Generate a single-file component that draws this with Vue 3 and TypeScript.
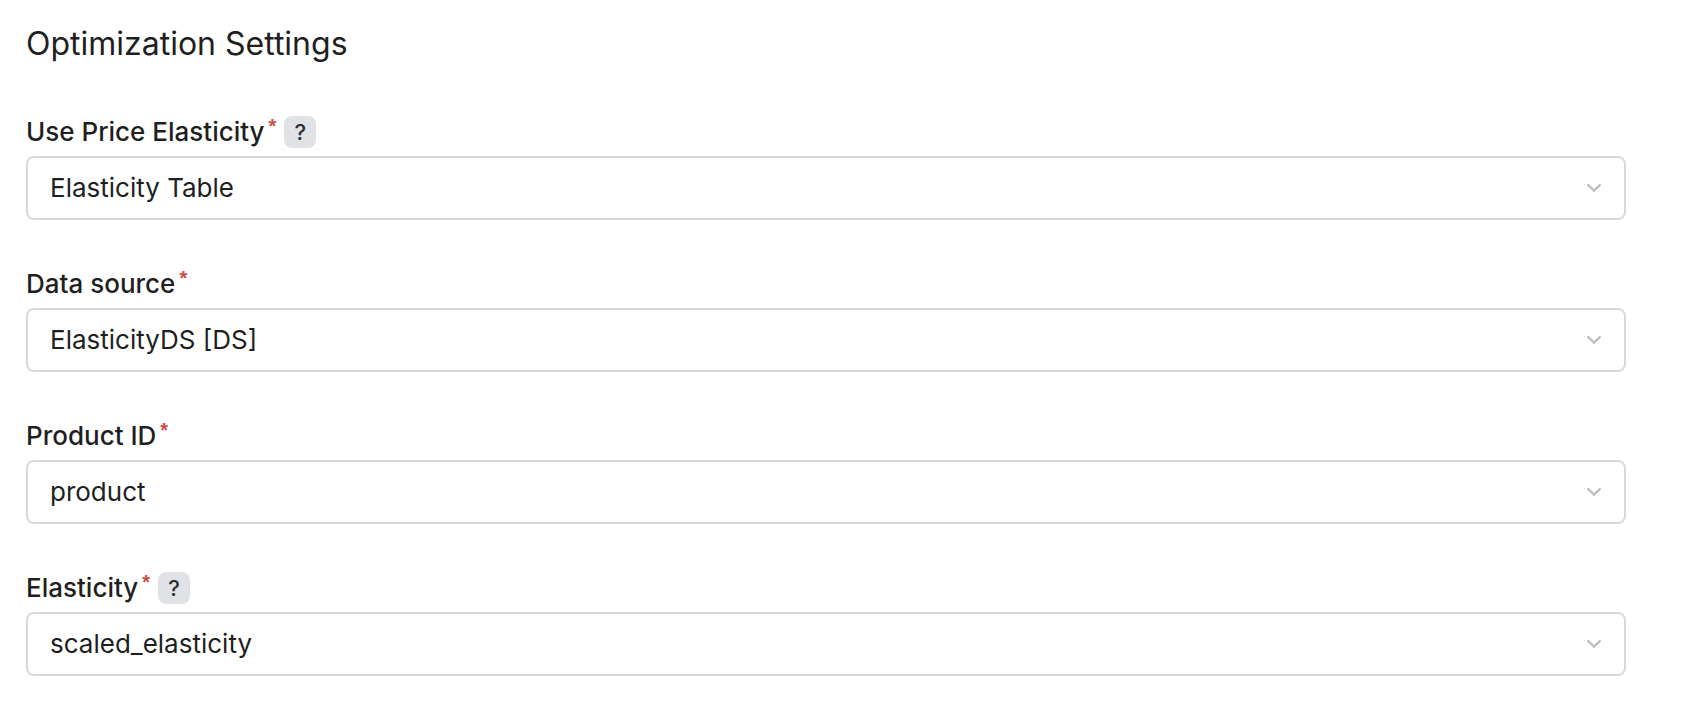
<script setup lang="ts">
import { ref } from 'vue'

interface Field {
  id: string
  label: string
  value: string
  help: boolean
}

const fields = ref<Field[]>([
  { id: 'use-price-elasticity', label: 'Use Price Elasticity', value: 'Elasticity Table', help: true },
  { id: 'data-source', label: 'Data source', value: 'ElasticityDS [DS]', help: false },
  { id: 'product-id', label: 'Product ID', value: 'product', help: false },
  { id: 'elasticity', label: 'Elasticity', value: 'scaled_elasticity', help: true },
])
</script>

<template>
  <main class="settings">
    <h1 class="title">Optimization Settings</h1>
    <form class="fields" @submit.prevent>
      <div v-for="field in fields" :key="field.id" class="field">
        <div class="label-row">
          <label class="label" :for="field.id">{{ field.label }}</label>
          <span class="required" aria-hidden="true">*</span>
          <button v-if="field.help" type="button" class="help">?</button>
        </div>
        <div class="control">
          <select :id="field.id" v-model="field.value" class="select" required>
            <option :value="field.value">{{ field.value }}</option>
          </select>
          <svg class="chevron" viewBox="0 0 16 16" aria-hidden="true">
            <path d="M2.2 5.2L8 10.6L13.8 5.2" />
          </svg>
        </div>
      </div>
    </form>
  </main>
</template>

<style>
body {
  background: #fff;
}
</style>

<style scoped>
.settings {
  padding: 24px 58px 40px 26px;
  color: #1f1f1f;
  font-family: Inter, "Liberation Sans", sans-serif;
}

.title {
  margin: 0 0 48px;
  font-size: 32px;
  line-height: 40px;
  font-weight: 400;
}

.fields {
  display: flex;
  flex-direction: column;
  gap: 44px;
}

.field {
  display: flex;
  flex-direction: column;
  gap: 4px;
}

.label-row {
  display: flex;
  align-items: center;
  height: 40px;
}

.label {
  font-size: 26px;
  line-height: 40px;
  font-weight: 500;
}

.required {
  align-self: flex-start;
  margin-left: 4px;
  color: #d04a42;
  font-family: "Liberation Sans", Arial, sans-serif;
  font-size: 20px;
  font-weight: 700;
  line-height: 28px;
}

.help {
  width: 32px;
  height: 32px;
  margin-left: 8px;
  padding: 0;
  border: 0;
  border-radius: 8px;
  background: #e1e2e6;
  color: #2c2d30;
  font: 500 22px/32px Inter, "Liberation Sans", sans-serif;
}

.control {
  display: grid;
  align-items: center;
}

.select {
  grid-area: 1 / 1;
  appearance: none;
  width: 100%;
  height: 64px;
  padding: 0 60px 0 22px;
  border: 2px solid #d9d9d9;
  border-radius: 8px;
  background: #fff;
  color: #1f1f1f;
  font: 400 26px/40px Inter, "Liberation Sans", sans-serif;
}

.chevron {
  grid-area: 1 / 1;
  justify-self: end;
  width: 16px;
  height: 16px;
  margin-right: 24px;
  fill: none;
  stroke: #bfbfbf;
  stroke-width: 2.5;
  stroke-linecap: round;
  pointer-events: none;
}
</style>
